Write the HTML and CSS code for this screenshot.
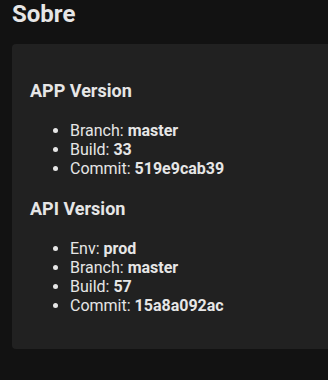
FILE: index.html
```html
<!DOCTYPE html>
<html>
<head>
<meta charset="utf-8">
<link rel="stylesheet" href="styles.css">
</head>
<body>
<div class="page">
  <h2 class="title">Sobre</h2>
  <div class="card">
    <h3 class="section">APP Version</h3>
    <ul class="info">
      <li>Branch: <b>master</b></li>
      <li>Build: <b>33</b></li>
      <li>Commit: <b>519e9cab39</b></li>
    </ul>
    <h3 class="section">API Version</h3>
    <ul class="info">
      <li>Env: <b>prod</b></li>
      <li>Branch: <b>master</b></li>
      <li>Build: <b>57</b></li>
      <li>Commit: <b>15a8a092ac</b></li>
    </ul>
  </div>
</div>
</body>
</html>
```
FILE: styles.css
```css
html, body {
  margin: 0;
  padding: 0;
  background: #121212;
  overflow: hidden;
}
.page {
  padding: 0 0 0 12px;
  font-family: Roboto, "Liberation Sans", sans-serif;
  color: #e6e6e6;
  width: 316px;
}
.title {
  margin: 0;
  font-size: 24px;
  font-weight: 700;
  line-height: 28px;
}
.card {
  margin-top: 16px;
  margin-right: -40px;
  background: #212121;
  border-radius: 4px;
  padding: 18px 18px 16px 18px;
}
.section {
  margin: 18px 0 0 0;
  font-size: 18px;
  font-weight: 700;
  line-height: 22px;
}
.info + .section {
  margin-top: 20px;
}
.info {
  margin: 19px 0 18px 0;
  padding-left: 40px;
  font-size: 16px;
  line-height: 19px;
}
.info b {
  font-weight: 700;
}
```
